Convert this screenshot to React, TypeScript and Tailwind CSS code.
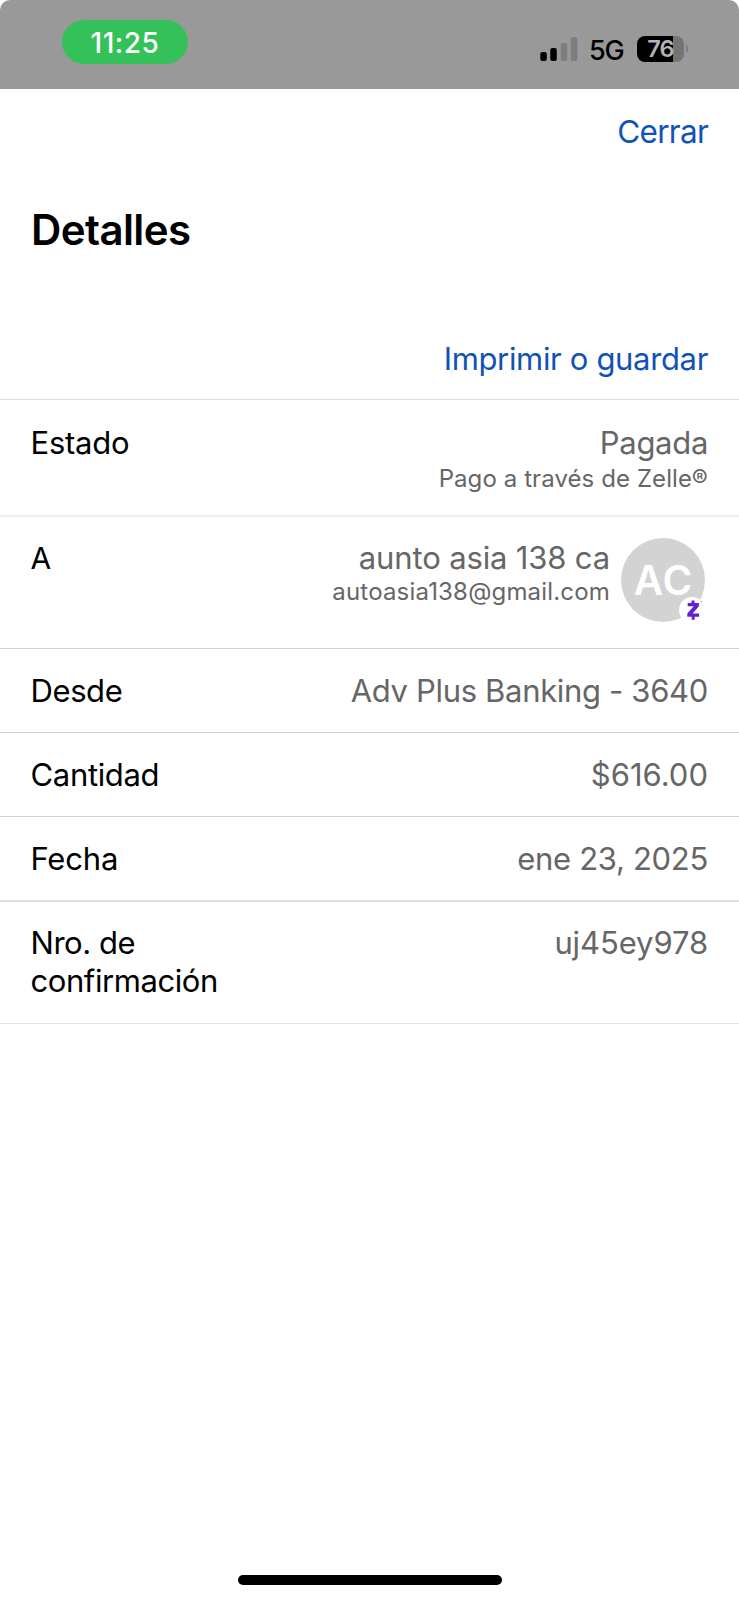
import type { ReactNode } from 'react';

function StatusBar() {
  return (
    <div className="bg-white">
      <header className="flex h-[89px] items-start rounded-t-[10px] bg-[#999999] pl-[62px] pr-[50px]">
        <div className="mt-5 flex h-11 w-[126px] items-center justify-center rounded-full bg-[#34c159] pt-px text-[28px] leading-[34px] font-medium tracking-[0.5px] text-white">
          11:25
        </div>
        <div className="mt-[35px] ml-auto flex h-7 items-center">
          <svg width="38" height="26" viewBox="0 0 38 26" className="mr-[11px]">
            <rect x="0.3" y="16" width="6.5" height="9" rx="2" fill="#000" />
            <rect x="10.3" y="12" width="6.5" height="13" rx="2" fill="#000" />
            <rect x="20.8" y="7" width="6.5" height="18" rx="2" fill="#7d7d7d" />
            <rect x="30.8" y="1.2" width="6.5" height="23.8" rx="2" fill="#7d7d7d" />
          </svg>
          <span className="mr-[13px] h-7 w-[35px] text-[27px] leading-[32px] font-medium tracking-[-1.19px]">5G</span>
          <div className="flex h-[26px] w-[47px] rounded-[8px] bg-linear-to-r from-black from-[76%] to-[#747474] to-[76%]">
            <span className="h-[26px] w-full text-center text-[23.5px] leading-[26px] font-semibold tracking-[-0.8px] text-[#b4b4b4]">76</span>
          </div>
          <svg width="4" height="10" viewBox="0 0 4 10" className="ml-px">
            <path d="M1 0.8C4 2 4 8 1 9.2Z" fill="#7d7d7d" />
          </svg>
        </div>
      </header>
    </div>
  );
}

function ZelleBadge() {
  return (
    <div className="absolute right-0 -bottom-px flex size-[26px] items-center justify-center rounded-full bg-white">
      <svg width="26" height="26" viewBox="0 0 26 26">
        <path
          d="M8.7 6H12.5V3.6H15.5V6H19.9V9.2L13.6 16.4H20.1V19.8H15.7V22.8H12.7V19.8H8.3V16.6L14.7 9.2H8.7Z"
          fill="#6420cf"
        />
        <circle cx="22.5" cy="4.5" r="0.8" fill="#a78bd8" />
      </svg>
    </div>
  );
}

function Row({ className, label, children }: { className: string; label: ReactNode; children: ReactNode }) {
  return (
    <div className={`flex items-start justify-between pr-[31px] pl-[30.5px] text-[31px] leading-[38px] ${className}`}>
      <dt className="text-black">{label}</dt>
      <dd className="text-right text-[#666666]">{children}</dd>
    </div>
  );
}

export default function App() {
  return (
    <main className="flex h-[1600px] w-[739px] flex-col bg-white font-['Inter',sans-serif] whitespace-nowrap text-black">
      <StatusBar />
      <div className="flex h-[100px] justify-end pt-[24px] pr-[31px] text-[31.5px] leading-[38px] tracking-[-0.75px] text-[#0f52ba]">
        <button type="button" className="h-[38px]">Cerrar</button>
      </div>
      <h1 className="h-[151px] pt-[16px] pl-[31px] text-[42px] leading-[50px] font-semibold tracking-[-0.6px]">Detalles</h1>
      <div className="flex h-[60px] justify-end border-b border-[#dcdcdc] pr-[31px] text-[31px] leading-[38px] tracking-[-0.34px] text-[#0f52ba]">
        <button type="button" className="h-[38px]">Imprimir o guardar</button>
      </div>
      <dl>
        <Row className="h-[117px] border-b-2 border-[#eeeeee] pt-[24px]" label={<span className="tracking-[-0.24px]">Estado</span>}>
          <p className="tracking-[-0.3px]">Pagada</p>
          <p className="text-[24px] leading-[34px] tracking-[0.09px]">Pago a través de Zelle®</p>
        </Row>
        <Row className="h-[132px] border-b border-[#d2d2d2] pt-[22px]" label={<span className="text-[30px]">A</span>}>
          <div className="mr-[3px] flex items-start">
            <div className="mr-[11px]">
              <p className="tracking-[-0.15px]">aunto asia 138 ca</p>
              <p className="pt-px text-[24px] leading-[28px] tracking-[0.18px]">autoasia138@gmail.com</p>
            </div>
            <div className="relative -mt-px flex size-[84px] items-center justify-center rounded-full bg-[#d3d3d3] pt-[2px] pl-px text-[40.5px] leading-[50px] font-semibold tracking-[1px] text-white">
              AC
              <ZelleBadge />
            </div>
          </div>
        </Row>
        <Row className="h-[84px] border-b border-[#d2d2d2] pt-[23px]" label={<span className="tracking-[-0.4px]">Desde</span>}>
          <p className="tracking-[-0.33px]">Adv Plus Banking - 3640</p>
        </Row>
        <Row className="h-[84px] border-b border-[#d2d2d2] pt-[23px]" label={<span className="tracking-[-0.33px]">Cantidad</span>}>
          <p>$616.00</p>
        </Row>
        <Row className="h-[85px] border-b-2 border-[#e0e0e0] pt-[23px]" label={<span className="tracking-[-0.2px]">Fecha</span>}>
          <p className="tracking-[-0.3px]">ene 23, 2025</p>
        </Row>
        <Row
          className="h-[122px] border-b border-[#e4e4e4] pt-[22px]"
          label={
            <>
              <span className="block tracking-[-0.45px]">Nro. de</span>
              <span className="block tracking-[-0.42px]">confirmación</span>
            </>
          }
        >
          <p className="tracking-[-0.1px]">uj45ey978</p>
        </Row>
      </dl>
      <div className="mt-auto mb-[15px] ml-[238px] h-[10px] w-[264px] rounded-full bg-black" />
    </main>
  );
}
